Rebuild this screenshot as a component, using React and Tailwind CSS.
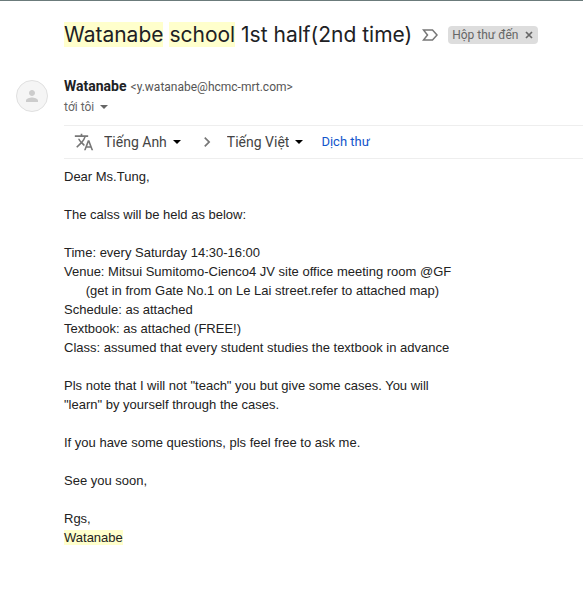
import { useState } from 'react'
import { MdPerson, MdTranslate, MdChevronRight } from 'react-icons/md'

const LANGUAGES = ['Tiếng Anh', 'Tiếng Việt']

const BODY = `Dear Ms.Tung,

The calss will be held as below:

Time: every Saturday 14:30-16:00
Venue: Mitsui Sumitomo-Cienco4 JV site office meeting room @GF
      (get in from Gate No.1 on Le Lai street.refer to attached map)
Schedule: as attached
Textbook: as attached (FREE!)
Class: assumed that every student studies the textbook in advance

Pls note that I will not "teach" you but give some cases. You will
"learn" by yourself through the cases.

If you have some questions, pls feel free to ask me.

See you soon,

Rgs,
`

function Caret({ className }) {
  return (
    <svg viewBox="0 0 8 4" className={`h-1 w-2 shrink-0 ${className}`} aria-hidden="true">
      <path d="M0 0h8L4 4z" fill="currentColor" />
    </svg>
  )
}

function Mark({ children }) {
  return <mark className="bg-[#ffffcc] text-inherit">{children}</mark>
}

function LanguageSelect({ label, value, onChange }) {
  return (
    <label className="flex items-center gap-1.5">
      <select
        aria-label={label}
        value={value}
        onChange={(e) => onChange(e.target.value)}
        className="field-sizing-content cursor-pointer appearance-none bg-transparent text-[14px] leading-5 text-[#444444] outline-none"
      >
        {LANGUAGES.map((l) => (
          <option key={l}>{l}</option>
        ))}
      </select>
      <Caret className="text-black" />
    </label>
  )
}

export default function App() {
  const [from, setFrom] = useState('Tiếng Anh')
  const [to, setTo] = useState('Tiếng Việt')
  const [inbox, setInbox] = useState(true)

  return (
    <main className="min-h-screen border-t border-[#6b7b7b] bg-white pb-10 font-['Roboto',sans-serif]">
      <header className="flex items-center pt-5 pl-16">
        <h1 className="font-['Inter',sans-serif] text-[21px] leading-7 whitespace-nowrap text-[#202124]">
          <Mark>Watanabe</Mark> <Mark>school</Mark> 1st half(2nd time)
        </h1>
        <button type="button" aria-label="Quan trọng" className="ml-2.5 shrink-0">
          <svg viewBox="0 0 16 12" className="h-3 w-4" fill="none" stroke="#777777" strokeWidth="1.5">
            <path d="M1.5 1h9L15 6l-4.500 5h-9L5.500 6z" />
          </svg>
        </button>
        {inbox && (
          <span className="ml-2.5 flex h-[18px] shrink-0 items-center gap-1.5 rounded bg-[#dddddd] px-1 text-[12px] whitespace-nowrap text-[#666666]">
            Hộp thư đến
            <button type="button" aria-label="Xóa nhãn" onClick={() => setInbox(false)}>
              <svg viewBox="0 0 10 10" className="size-2.5" stroke="currentColor" strokeWidth="1.7">
                <path d="M2 2l6 6M8 2L2 8" />
              </svg>
            </button>
          </span>
        )}
      </header>

      <section className="flex gap-4 pt-[27px] pl-4">
        <div className="mt-1 grid size-8 shrink-0 place-items-center rounded-full border border-[#e0e0e0] bg-[#f5f5f5]">
          <MdPerson className="size-[18px] text-[#cccccc]" />
        </div>
        <div className="leading-5 whitespace-nowrap">
          <p className="flex items-baseline gap-1 text-[12px] leading-5 text-[#555555]">
            <b className="text-[14px]/5 text-[#202124]">Watanabe</b>
            <span>&lt;y.watanabe@hcmc-mrt.com&gt;</span>
          </p>
          <button type="button" className="flex items-center gap-1.5 text-[12px] leading-5 text-[#666666]">
            tới tôi <Caret className="text-[#666666]" />
          </button>
        </div>
      </section>

      <div className="mt-2 ml-16 flex h-[34px] items-center border-y border-[#eeeeee] pl-2.5 whitespace-nowrap">
        <MdTranslate className="mr-2.5 size-5 shrink-0 text-[#777777]" />
        <LanguageSelect label="Dịch từ" value={from} onChange={setFrom} />
        <MdChevronRight className="mr-2.5 ml-4 size-5 shrink-0 text-[#777777]" />
        <LanguageSelect label="Dịch sang" value={to} onChange={setTo} />
        <a href="#translate" className="ml-[18px] text-[13px] text-[#1155cc]">
          Dịch thư
        </a>
      </div>

      <article className="pt-2 pr-4 pl-16 font-['Liberation_Sans',sans-serif] text-[13px] leading-[19px] whitespace-pre-wrap text-[#222222]">
        {BODY}
        <Mark>Watanabe</Mark>
      </article>
    </main>
  )
}
